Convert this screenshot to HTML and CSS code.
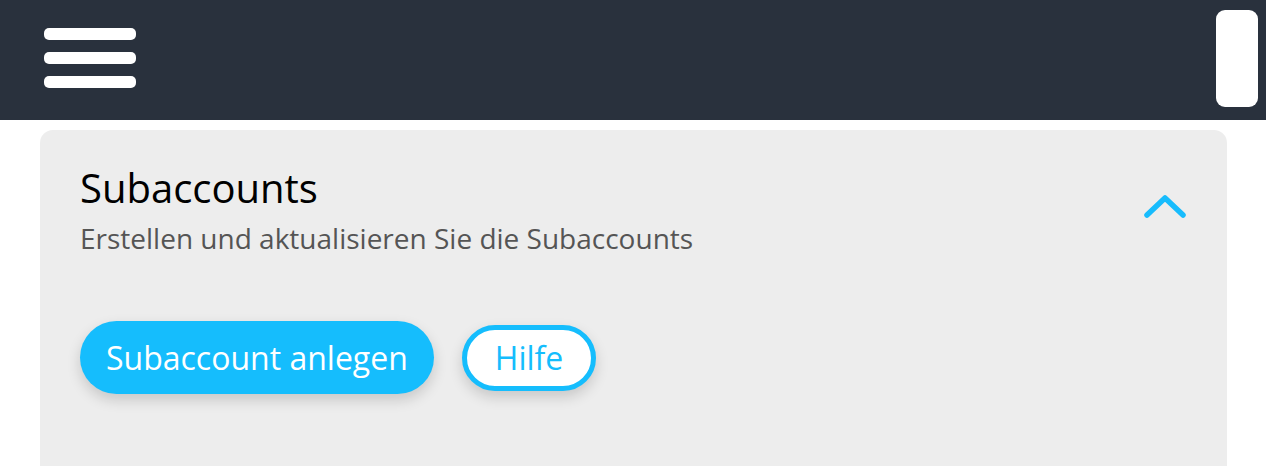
FILE: index.html
```html
<!DOCTYPE html>
<html lang="de">
<head>
<meta charset="utf-8">
<link rel="stylesheet" href="styles.css">
</head>
<body>
<header class="topbar">
  <button class="burger" aria-label="Menü">
    <span></span><span></span><span></span>
  </button>
  <div class="side-tab"></div>
</header>
<main class="content">
  <section class="card">
    <div class="card-head">
      <div class="card-titles">
        <h1 class="card-title">Subaccounts</h1>
        <p class="card-sub">Erstellen und aktualisieren Sie die Subaccounts</p>
      </div>
      <svg class="chevron" viewBox="0 0 44 28" width="44" height="28">
        <path d="M4 23 L22 6 L40 23" fill="none" stroke="#17bcfd" stroke-width="5.5" stroke-linecap="round" stroke-linejoin="round"/>
      </svg>
    </div>
    <div class="actions">
      <button class="btn btn-primary">Subaccount anlegen</button>
      <button class="btn btn-outline">Hilfe</button>
    </div>
  </section>
</main>
</body>
</html>
```
FILE: styles.css
```css
* { box-sizing: border-box; }
html, body { margin: 0; padding: 0; }
body {
  background: #ffffff;
  font-family: "Open Sans", "Noto Sans", sans-serif;
  width: 1266px;
  height: 466px;
  overflow: hidden;
}
.topbar {
  height: 120px;
  background: #29313d;
  display: flex;
  align-items: flex-start;
  justify-content: space-between;
  padding: 0 8px 0 44px;
}
.burger {
  margin-top: 28px;
  width: 92px;
  padding: 0;
  border: 0;
  background: none;
  display: flex;
  flex-direction: column;
  gap: 12px;
}
.burger span {
  display: block;
  height: 12px;
  background: #ffffff;
  border-radius: 5px;
}
.side-tab {
  margin-top: 10px;
  width: 42px;
  height: 97px;
  background: #ffffff;
  border-radius: 9px;
}
.content {
  padding: 10px 39px 0 40px;
}
.card {
  background: #ededed;
  border-radius: 13px 13px 0 0;
  height: 340px;
  padding: 32px 40px 0 40px;
}
.card-head {
  display: flex;
  justify-content: space-between;
  align-items: center;
}
.card-title {
  margin: 0;
  font-size: 40px;
  font-weight: 400;
  color: #000000;
  line-height: 52px;
}
.card-sub {
  margin: 5px 0 0 0;
  font-size: 28px;
  color: #555555;
  line-height: 38px;
}
.chevron {
  margin: 0 0 8px 0;
}
.actions {
  margin-top: 64px;
  display: flex;
  align-items: center;
  gap: 28px;
}
.btn {
  font-family: "Open Sans", "Noto Sans", sans-serif;
  border-radius: 40px;
  font-size: 32px;
  cursor: pointer;
}
.btn-primary {
  height: 73px;
  padding: 0 26px;
  background: #15bdfd;
  color: #ffffff;
  border: 0;
  box-shadow: 0 6px 14px rgba(0,0,0,0.16);
}
.btn-outline {
  height: 66px;
  padding: 0 28px;
  background: #ffffff;
  color: #15bdfd;
  border: 5px solid #15bdfd;
  box-shadow: 0 6px 14px rgba(0,0,0,0.16);
}
```
